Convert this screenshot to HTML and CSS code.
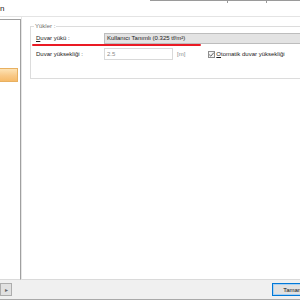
FILE: index.html
```html
<!DOCTYPE html>
<html lang="tr">
<head>
    <meta charset="UTF-8">
    <title>Duvar Yükleri</title>
    <link rel="stylesheet" href="styles.css">
</head>
<body>
    <!-- Title bar (cut off at the left) -->
    <div class="titlebar">
        <span class="title">n</span>
        <div class="caption-edge"><span></span><span></span></div>
    </div>

    <div class="main">
        <!-- Left navigation list -->
        <div class="sidebar">
            <div class="nav-item selected"></div>
        </div>

        <!-- Settings panel -->
        <div class="panel">
            <fieldset class="group">
                <legend>Yükler :</legend>
                <div class="row">
                    <label class="label"><u>D</u>uvar yükü :</label>
                    <div class="field readonly">Kullanıcı Tanımlı (0.325 tf/m²)</div>
                    <div class="annotation"></div>
                </div>
                <div class="row">
                    <label class="label">Duvar yüksekliği :</label>
                    <div class="field input disabled">2.5</div>
                    <span class="unit">[m]</span>
                    <label class="check">
                        <span class="box">
                            <svg width="7" height="7" viewBox="0 0 7 7"><path d="M1.2 3.6 L2.8 5.2 L5.9 1.6" fill="none" stroke="#555" stroke-width="0.9"/></svg>
                        </span>
                        <span><u>O</u>tomatik duvar yüksekliği</span>
                    </label>
                </div>
            </fieldset>
        </div>
    </div>

    <!-- Bottom buttons -->
    <div class="footer">
        <button class="more">&#9656;</button>
        <button class="ok">Tamam</button>
    </div>
</body>
</html>
```
FILE: styles.css
```css
body {
    margin: 0;
    width: 300px;
    height: 300px;
    overflow: hidden;
    background-color: #ffffff;
    font-family: "Liberation Sans", Arial, sans-serif;
    font-size: 6px;
    line-height: 7px;
    color: #222;
}

/* Title bar */
.titlebar {
    display: flex;
    height: 16px;
    border-bottom: 1px solid #e4e4e4;
    background-color: #fff;
}

.title {
    font-size: 8px;
    line-height: 8px;
    padding-top: 5px;
    color: #1b1b1b;
}

.caption-edge {
    display: flex;
    margin-left: auto;
    width: 150px;
    height: 2px;
    border-top: 1px solid #9a9a9a;
}

.caption-edge span {
    height: 2px;
    border-left: 1px solid #9a9a9a;
}

.caption-edge span:first-child {
    margin-left: 77px;
}

.caption-edge span:last-child {
    margin-left: 38px;
}

/* Main area */
.main {
    display: flex;
    height: 263px;
}

.sidebar {
    width: 21px;
    margin-top: 2px;
    box-sizing: border-box;
    border-top: 1px solid #a0a0a0;
    border-right: 1px solid #a0a0a0;
    border-bottom: 1px solid #dadada;
    background-color: #fff;
}

.nav-item {
    height: 14px;
    width: 18px;
}

.nav-item.selected {
    margin-top: 48px;
    box-sizing: border-box;
    border: 1px solid #e8b060;
    border-left: none;
    background: linear-gradient(#fde3b5, #f9c987 55%, #f6bb6a);
}

.panel {
    flex: 1;
    box-sizing: border-box;
    border-left: 1px solid #e6e6e6;
    border-bottom: 1px solid #dadada;
    padding: 6px 0 0 8px;
    overflow: hidden;
    background-color: #fff;
}

/* Group box */
.group {
    width: 300px;
    margin: 0;
    padding: 3px 0 18px 5px;
    border: 1px solid #dcdcdc;
}

.group legend {
    padding: 0 1px;
    margin-left: -2px;
    color: #6e6e6e;
}

.row {
    position: relative;
    display: flex;
    align-items: center;
}

.row + .row {
    margin-top: 4px;
}

.label {
    width: 68px;
    flex-shrink: 0;
}

.field {
    box-sizing: border-box;
    padding-left: 2px;
}

.field.readonly {
    flex: 1;
    height: 11px;
    line-height: 9px;
    border: 1px solid #bdbdbd;
    background-color: #e3e3e3;
    color: #1a1a1a;
}

.field.input {
    width: 69px;
    height: 12px;
    line-height: 10px;
    border: 1px solid #d9d9d9;
    background-color: #fff;
}

.field.disabled {
    color: #8c8c8c;
}

.unit {
    margin-left: 4px;
    color: #8c8c8c;
}

.check {
    display: flex;
    align-items: center;
    margin-left: 23px;
    gap: 1px;
}

.box {
    display: block;
    width: 7px;
    height: 7px;
    box-sizing: border-box;
    border: 1px solid #8e8e8e;
    background-color: #f4f4f4;
}

.box svg {
    display: block;
    margin: -1px;
}

/* Red hand-drawn mark over the first row */
.annotation {
    position: absolute;
    left: -4px;
    top: 11px;
    width: 169px;
    height: 2px;
    border-radius: 1px;
    background-color: #ea1a24;
}

/* Footer */
.footer {
    display: flex;
    align-items: flex-start;
    height: 20px;
    box-sizing: border-box;
    padding-top: 3px;
    border-bottom: 1px solid #a9a9a9;
    background-color: #f0f0f0;
}

button {
    font-family: inherit;
    font-size: 6px;
    height: 13px;
    padding: 0;
    background-color: #e1e1e1;
    color: #111;
    box-sizing: border-box;
}

.more {
    width: 12px;
    border: 1px solid #adadad;
    color: #666;
    line-height: 10px;
}

.ok {
    flex-shrink: 0;
    width: 42px;
    margin-left: auto;
    margin-right: -14px;
    border: 1px solid #0078d7;
    box-shadow: inset 0 0 0 1px #a9d0f2;
}
```
